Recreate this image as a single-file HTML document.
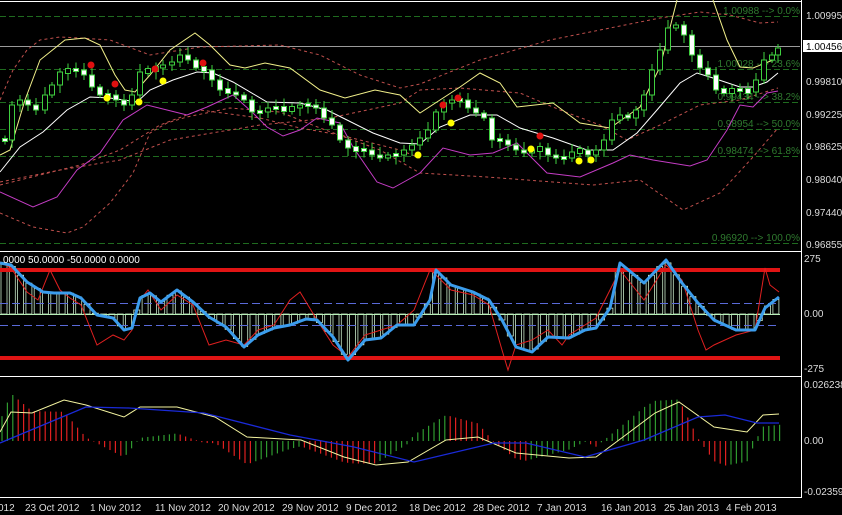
<!DOCTYPE html><html><head><meta charset="utf-8"><style>
html,body{margin:0;padding:0;background:#000;width:842px;height:515px;overflow:hidden}
svg{display:block}
text{font-family:"Liberation Sans",sans-serif;font-size:10px;fill:#ddd}
</style></head><body>
<svg id="s" width="842" height="515" viewBox="0 0 842 515" xmlns="http://www.w3.org/2000/svg">
<rect width="842" height="515" fill="#000"/>
<g stroke="#fff" stroke-width="1" fill="none">
<line x1="0" y1="1.5" x2="802" y2="1.5"/>
<line x1="801.5" y1="0" x2="801.5" y2="498"/>
<line x1="0" y1="251.5" x2="802" y2="251.5"/>
<line x1="0" y1="376.5" x2="802" y2="376.5"/>
<line x1="0" y1="497.5" x2="802" y2="497.5"/>
</g>
<g stroke="#1f6b1f" stroke-dasharray="6,3" stroke-width="1">
<line x1="0" y1="16.5" x2="800" y2="16.5"/><line x1="0" y1="69.5" x2="800" y2="69.5"/>
<line x1="0" y1="102.5" x2="800" y2="102.5"/><line x1="0" y1="129.5" x2="800" y2="129.5"/>
<line x1="0" y1="156.5" x2="800" y2="156.5"/><line x1="0" y1="243.5" x2="800" y2="243.5"/>
</g>
<line x1="0" y1="46.5" x2="800" y2="46.5" stroke="#9a9a9a"/>
<g>
<text x="800" y="14" text-anchor="end" style="fill:#2f7a2f">1.00988 --&gt; 0.0%</text>
<text x="800" y="67" text-anchor="end" style="fill:#2f7a2f">1.00028 --&gt; 23.6%</text>
<text x="800" y="100" text-anchor="end" style="fill:#2f7a2f">0.99434 --&gt; 38.2%</text>
<text x="800" y="127" text-anchor="end" style="fill:#2f7a2f">0.98954 --&gt; 50.0%</text>
<text x="800" y="154" text-anchor="end" style="fill:#2f7a2f">0.98474 --&gt; 61.8%</text>
<text x="800" y="241" text-anchor="end" style="fill:#2f7a2f">0.96920 --&gt; 100.0%</text>
</g>
<g fill="none" stroke-width="1">
<polyline stroke="#c0504d" stroke-dasharray="3,3" points="0,100 13,70 27,50 40,40 60,37 80,38 110,40 150,55 200,47 280,45 320,55 360,75 400,88 420,84 480,60 550,40 600,30 660,18 700,12 730,15 760,23 778,22"/>
<polyline stroke="#c0504d" stroke-dasharray="3,3" points="0,182 60,170 120,160 170,140 200,135 260,125 330,118 400,103 420,90 460,88 520,93 560,110 600,125 627,140 660,125 700,105 740,100 778,88"/>
<polyline stroke="#c0504d" stroke-dasharray="3,3" points="0,213 33,227 67,233 83,227 110,203 133,173 150,133 167,123 187,117 230,108 280,112 320,128 380,150 420,173 487,177 553,182 593,185 640,180 683,210 720,193 753,157 778,128"/>
<polyline stroke="#c0504d" stroke-dasharray="3,3" points="0,185 40,175 80,165 120,150 160,125 200,110 260,118 300,128 340,135 400,150 420,158"/>
<polyline stroke="#f2f08a" points="0,155 10,150 25,100 40,60 65,40 85,38 100,45 115,75 125,90 135,92 150,75 170,50 195,33 210,45 230,65 245,68 265,63 290,68 320,90 345,98 375,90 400,95 420,113 440,100 460,87 480,73 500,83 517,107 553,103 580,123 610,128 640,107 660,67 677,0"/>
<polyline stroke="#f2f08a" points="713,0 727,40 740,67 753,68 773,60"/>
<polyline stroke="#fff" points="0,172 20,147 43,132 67,110 90,97 110,98 137,102 150,90 173,80 197,72 213,73 233,82 267,102 300,103 327,110 347,120 373,133 400,143 420,144 440,127 470,115 497,115 520,128 553,138 587,150 613,150 637,133 657,110 680,83 697,73 713,78 740,87 753,87 767,82 778,73"/>
<polyline stroke="#c43cc4" points="0,192 33,207 57,197 77,170 100,153 123,120 147,105 167,110 187,115 207,107 233,95 253,113 267,127 283,136 300,130 317,118 340,123 353,147 377,182 393,188 420,173 443,148 470,155 493,153 517,143 547,173 580,177 613,163 630,155 653,160 690,166 707,160 727,130 740,105 753,107 767,93 778,91"/>
</g>
<g id="candles"></g>
<g>
<circle cx="91" cy="65" r="3.5" fill="#e01010"/><circle cx="115" cy="84" r="3.5" fill="#e01010"/><circle cx="155" cy="69" r="3.5" fill="#e01010"/><circle cx="203" cy="63" r="3.5" fill="#e01010"/><circle cx="443" cy="105" r="3.5" fill="#e01010"/><circle cx="458" cy="98" r="3.5" fill="#e01010"/><circle cx="540" cy="136" r="3.5" fill="#e01010"/>
<circle cx="107" cy="98" r="3.5" fill="#ffff00"/><circle cx="139" cy="102" r="3.5" fill="#ffff00"/><circle cx="163" cy="81" r="3.5" fill="#ffff00"/><circle cx="418" cy="155" r="3.5" fill="#ffff00"/><circle cx="451" cy="123" r="3.5" fill="#ffff00"/><circle cx="531" cy="149" r="3.5" fill="#ffff00"/><circle cx="579" cy="161" r="3.5" fill="#ffff00"/><circle cx="591" cy="160" r="3.5" fill="#ffff00"/>
</g>
<g>
<text x="806" y="19">1.00995</text>
<rect x="803" y="40" width="39" height="12" fill="#fff"/><text x="806" y="50" style="fill:#000">1.00456</text>
<text x="806" y="85">0.99810</text><text x="806" y="118">0.99225</text><text x="806" y="150">0.98625</text>
<text x="806" y="183">0.98040</text><text x="806" y="216">0.97440</text><text x="806" y="248">0.96855</text>
</g>
<g id="p2h"></g>
<line x1="0" y1="303.5" x2="780" y2="303.5" stroke="#5a6ad8" stroke-dasharray="8,4"/>
<line x1="0" y1="325.5" x2="780" y2="325.5" stroke="#5a6ad8" stroke-dasharray="8,4"/>
<line x1="0" y1="314.5" x2="780" y2="314.5" stroke="#b8f0b8"/>
<rect x="0" y="268" width="780" height="4" fill="#e01414"/>
<rect x="0" y="356" width="780" height="4" fill="#e01414"/>
<polyline fill="none" stroke="#e02020" stroke-width="1" points="0,262 11,268 27,292 38,300 50,270 60,290 70,298 81,305 97,345 113,335 124,340 132,330 140,300 148,290 161,310 177,295 193,305 209,345 226,340 244,345 258,330 274,325 290,300 300,292 317,320 333,345 348,357 365,335 381,330 397,325 414,310 430,270 436,275 451,290 473,295 489,305 502,350 508,370 516,345 532,340 548,330 562,345 569,335 585,325 596,318 610,290 620,270 644,300 666,265 682,280 698,330 706,350 714,345 736,335 755,330 765,268 770,285 779,292"/>
<polyline id="blue2" fill="none" stroke="#3b9ded" stroke-width="3" stroke-linejoin="round" points="0,263 11,265 27,282 43,292 54,293 70,293 81,298 97,315 113,318 124,330 132,328 140,298 150,293 161,302 177,290 193,302 209,317 226,327 244,347 258,335 274,328 290,325 306,319 317,320 333,337 348,360 365,340 381,338 397,325 414,325 430,300 436,270 451,285 473,292 489,300 502,320 516,347 532,352 548,337 569,338 585,330 596,328 610,308 620,263 644,283 666,260 682,283 698,303 714,320 736,330 755,330 765,308 779,297"/>
<text x="3" y="263" style="fill:#fff">0000 50.0000 -50.0000 0.0000</text>
<text x="804" y="262">275</text><text x="804" y="317">0.00</text><text x="804" y="372">-275</text>
<g id="p3h"></g>
<polyline id="yel3" fill="none" stroke="#f4f4a0" points="0,432 11,412 32,413 64,400 86,405 124,417 140,407 177,407 215,417 247,437 301,440 344,457 376,465 408,462 446,440 478,437 516,453 569,458 596,457 623,437 655,413 679,402 714,427 747,432 763,415 779,414"/>
<polyline id="blu3" fill="none" stroke="#1a2ad8" stroke-width="1.3" points="0,443 86,407 129,408 204,413 290,435 354,447 414,462 494,443 526,443 585,457 644,440 698,417 725,415 757,423 779,423"/>
<text x="804" y="388">0.026238</text><text x="804" y="444">0.00</text><text x="804" y="495">-0.02359</text>
<g>
<text x="-2" y="511">012</text><text x="25" y="511">23 Oct 2012</text><text x="90" y="511">1 Nov 2012</text>
<text x="155" y="511">11 Nov 2012</text><text x="218" y="511">20 Nov 2012</text><text x="282" y="511">29 Nov 2012</text>
<text x="346" y="511">9 Dec 2012</text><text x="409" y="511">18 Dec 2012</text><text x="473" y="511">28 Dec 2012</text>
<text x="537" y="511">7 Jan 2013</text><text x="601" y="511">16 Jan 2013</text><text x="664" y="511">25 Jan 2013</text>
<text x="726" y="511">4 Feb 2013</text>
</g>
</svg>
<script>
(function(){
var NS="http://www.w3.org/2000/svg";
function el(t,a,p){var e=document.createElementNS(NS,t);for(var k in a)e.setAttribute(k,a[k]);p.appendChild(e);return e;}
var c=[[5,140],[12,105],[20,100],[28,105],[36,110],[45,95],[52,85],[60,72],[68,70],[76,70],[84,75],[92,87],[100,95],[108,95],[116,100],[124,105],[132,95],[140,72],[148,70],[156,68],[163,65],[172,62],[180,55],[188,60],[196,68],[204,70],[212,80],[220,90],[228,92],[236,95],[244,100],[252,112],[260,112],[268,108],[276,108],[284,110],[292,108],[300,105],[308,105],[316,108],[324,118],[332,125],[340,140],[348,148],[356,150],[364,150],[372,155],[380,158],[388,155],[396,155],[404,150],[412,145],[420,138],[428,130],[436,112],[444,103],[452,100],[460,100],[468,108],[476,113],[484,118],[492,140],[500,140],[508,145],[516,150],[524,153],[532,150],[540,148],[548,155],[556,158],[564,158],[572,152],[580,150],[588,155],[596,150],[604,140],[612,120],[620,115],[628,118],[636,110],[644,95],[652,70],[660,50],[668,28],[676,25],[684,35],[692,55],[700,68],[708,75],[716,90],[724,92],[732,90],[740,90],[748,92],[756,80],[764,60],[772,55],[778,48]];
var g=document.getElementById("candles");
for(var i=0;i<c.length;i++){var x=c[i][0],y=c[i][1];var p=i>0?c[i-1][1]:y;var top=Math.min(p,y),bot=Math.max(p,y);if(bot-top<3){top-=1.5;bot+=1.5;}
el("line",{x1:x,y1:top-3-(i*7%6),x2:x,y2:bot+3+(i*5%6),stroke:"#3fcf3f","stroke-width":1},g);
var up=y<p;el("rect",{x:x-2.5,y:top,width:5,height:bot-top,fill:up?"#000":"#fff",stroke:"#3fcf3f","stroke-width":1},g);}
function pts(id){return document.getElementById(id).getAttribute("points").trim().split(/\s+/).map(function(s){return s.split(",").map(Number);});}
function interp(P,x){for(var i=1;i<P.length;i++){if(x<=P[i][0]){var a=P[i-1],b=P[i];return a[1]+(b[1]-a[1])*(x-a[0])/(b[0]-a[0]);}}return P[P.length-1][1];}
var B=pts("blue2"),h2=document.getElementById("p2h");
for(var x=4;x<780;x+=8.3){var y=interp(B,x);el("rect",{x:x-3,y:Math.min(y,314),width:6,height:Math.abs(y-314),fill:"none",stroke:"#c8e8c8","stroke-width":0.8},h2);}
var Y=pts("yel3"),BL=pts("blu3"),h3=document.getElementById("p3h"),prev=0;
for(var x=2;x<780;x+=5.4){var d=(interp(BL,x)-interp(Y,x))*1.8;var col=d>prev?"#2f9a2f":"#e02020";prev=d;var yy=441-d;el("line",{x1:x,y1:441,x2:x,y2:yy,stroke:col,"stroke-width":1.2},h3);}
})();
</script>
</body></html>
